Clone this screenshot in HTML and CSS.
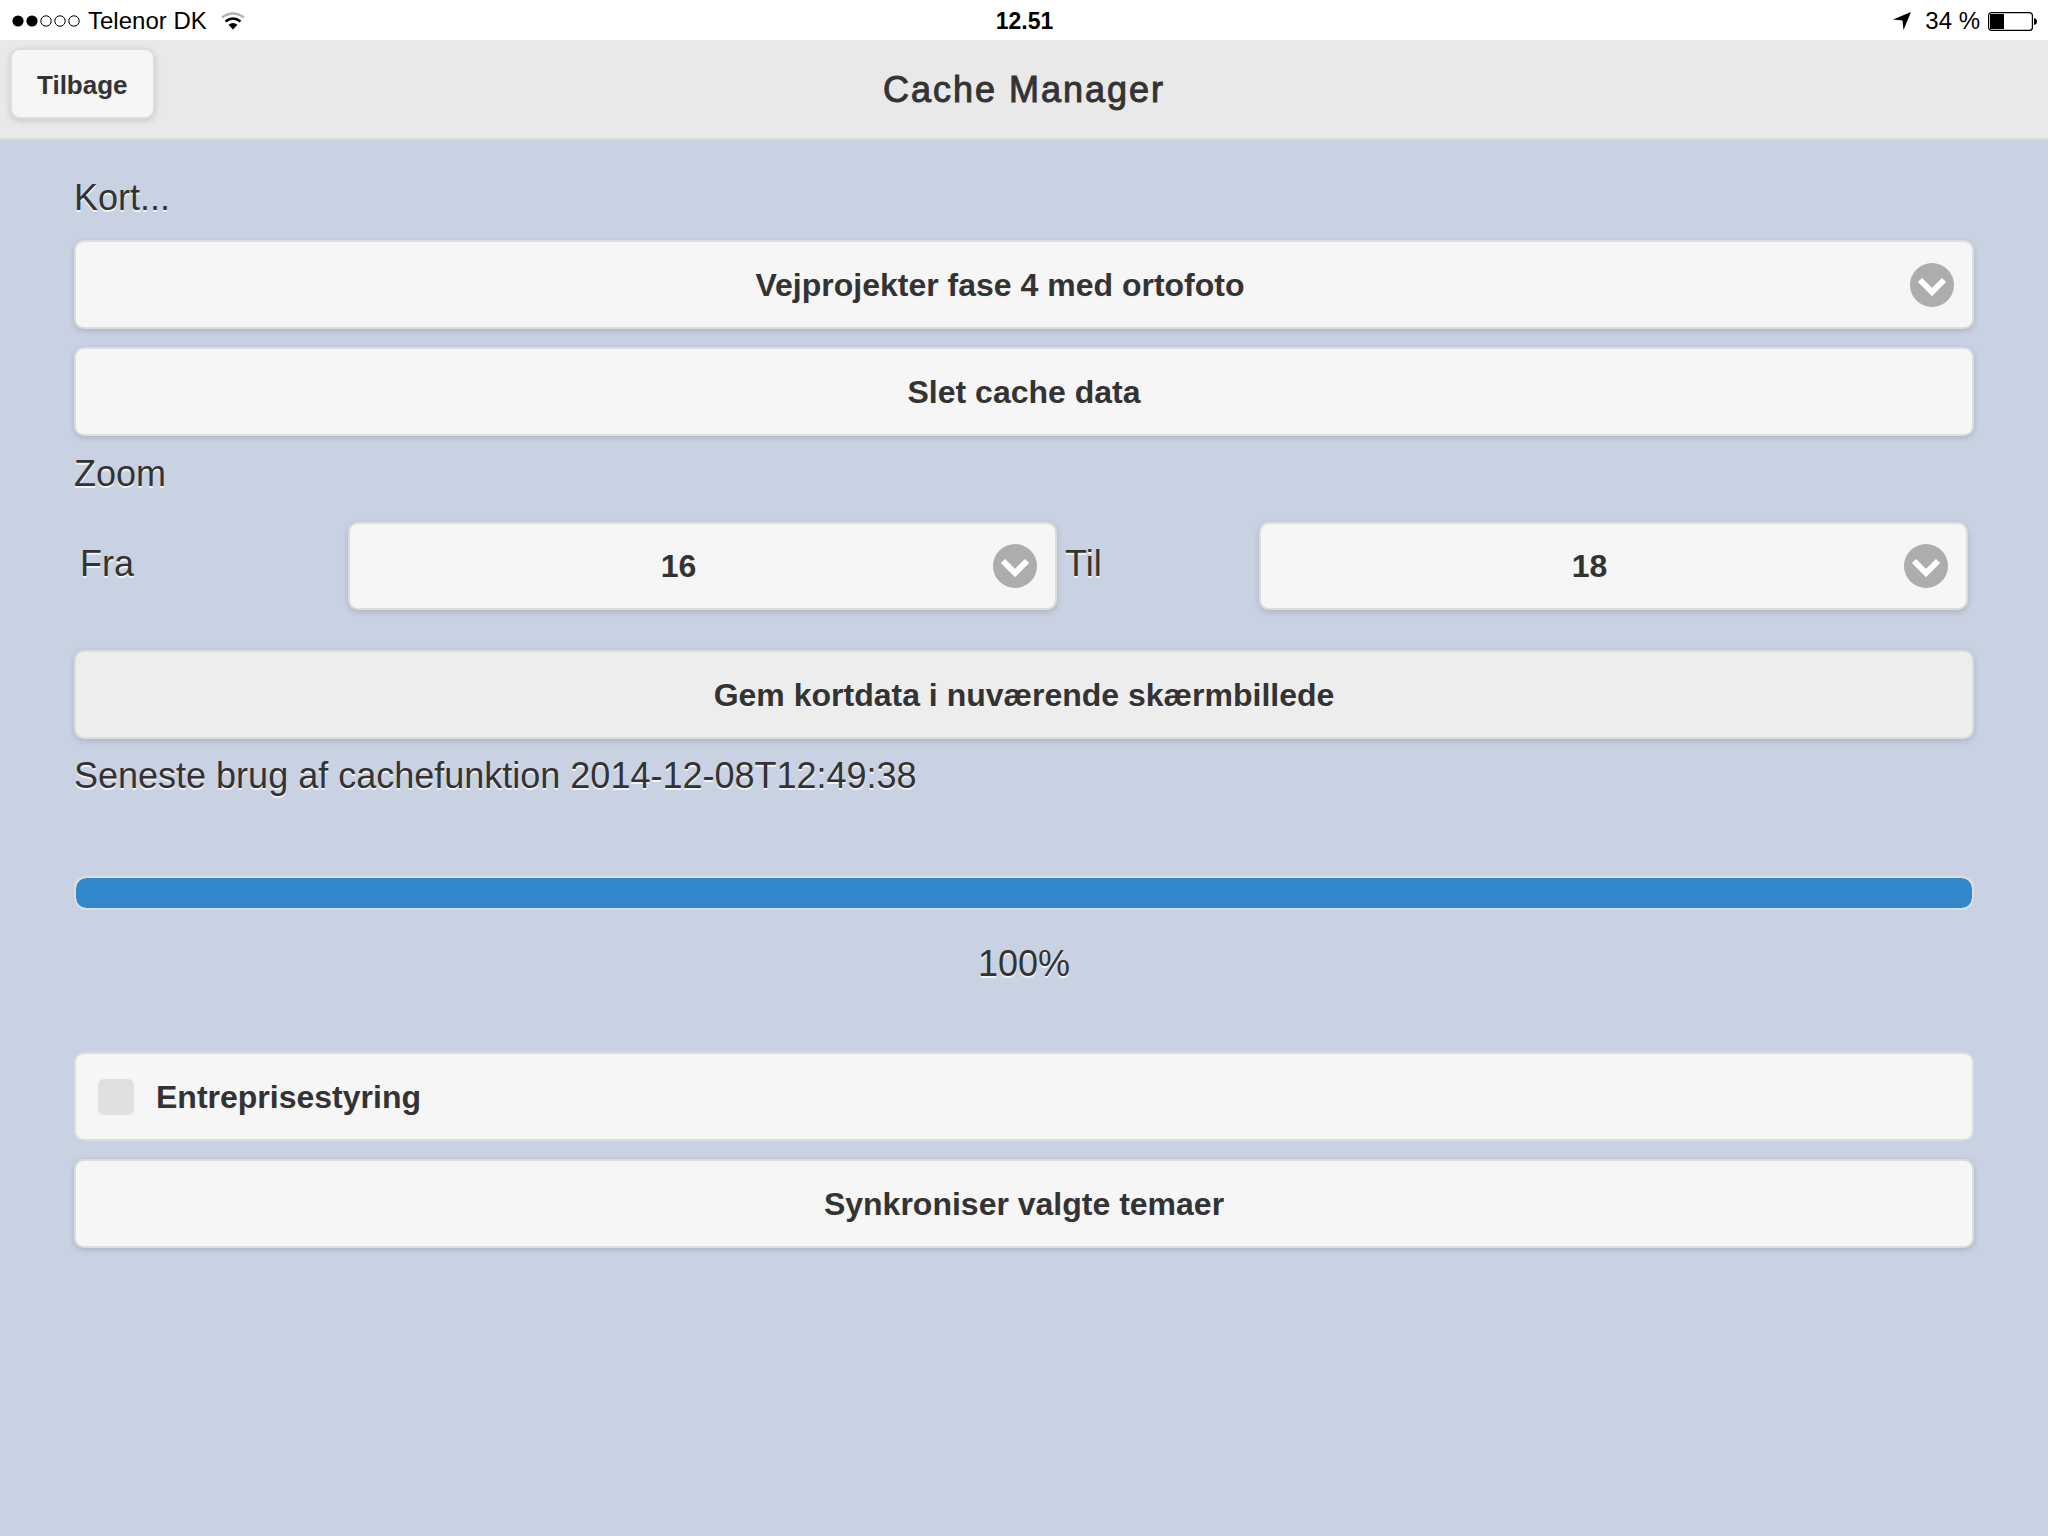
FILE: index.html
```html
<!DOCTYPE html>
<html lang="da">
<head>
<meta charset="utf-8">
<meta name="viewport" content="width=device-width, initial-scale=1">
<title>Cache Manager</title>
<link rel="stylesheet" href="styles.css">
</head>
<body>
<div class="status-bar">
  <div class="status-left">
    <svg class="signal" width="68" height="12" viewBox="0 0 68 12" aria-hidden="true">
      <circle cx="6" cy="6" r="5.6"/>
      <circle cx="20" cy="6" r="5.6"/>
      <g fill="none" stroke="#000" stroke-width="1"><circle cx="34" cy="6" r="5.2"/><circle cx="48" cy="6" r="5.2"/><circle cx="62" cy="6" r="5.2"/></g>
    </svg>
    <span>Telenor DK</span>
    <svg class="wifi" width="24" height="18" viewBox="0 0 24 18" aria-hidden="true">
      <path d="M1 5.500Q12-2.500 23 5.500" fill="none" stroke="#b3b3b3" stroke-width="2.400"/>
      <path d="M4.500 9.500Q12 3.500 19.500 9.500" fill="none" stroke="#000" stroke-width="2.600"/>
      <path d="M7.500 12.800Q12 9.200 16.500 12.800L12 17.500Z"/>
    </svg>
  </div>
  <div class="status-time">12.51</div>
  <div class="status-right">
    <svg width="18" height="18" viewBox="0 0 18 18" aria-hidden="true"><path d="M18 0L10.500 18L9.500 8.500L0 7.500Z"/></svg>
    <span>34 %</span>
    <svg class="battery" width="49" height="19" viewBox="0 0 49 19" aria-hidden="true">
      <rect x=".6" y=".6" width="43.800" height="17.800" rx="3" fill="none" stroke="#000" stroke-width="1.200"/>
      <path d="M2 2H16V17H2ZM46 6Q49 6.500 49 9.500T46 13Z"/>
    </svg>
  </div>
</div>

<header class="header">
  <button class="btn btn-back" type="button">Tilbage</button>
  <h1 class="title">Cache Manager</h1>
</header>

<main class="content">
  <label class="text" for="map">Kort...</label>
  <div class="select map-select">
    <select class="btn" id="map"><option>Vejprojekter fase 4 med ortofoto</option></select>
    <svg class="chevron" viewBox="0 0 44 44" aria-hidden="true"><circle cx="22" cy="22" r="22"/><path d="M10 17L22 29L34 17"/></svg>
  </div>
  <button class="btn" type="button">Slet cache data</button>

  <p class="text zoom-label">Zoom</p>
  <div class="zoom-row">
    <label class="text" for="from">Fra</label>
    <div class="select">
      <select class="btn" id="from"><option>16</option></select>
      <svg class="chevron" viewBox="0 0 44 44" aria-hidden="true"><circle cx="22" cy="22" r="22"/><path d="M10 17L22 29L34 17"/></svg>
    </div>
    <label class="text to-label" for="to">Til</label>
    <div class="select">
      <select class="btn" id="to"><option>18</option></select>
      <svg class="chevron" viewBox="0 0 44 44" aria-hidden="true"><circle cx="22" cy="22" r="22"/><path d="M10 17L22 29L34 17"/></svg>
    </div>
  </div>

  <button class="btn btn-active" type="button">Gem kortdata i nuværende skærmbillede</button>
  <p class="text last-used">Seneste brug af cachefunktion 2014-12-08T12:49:38</p>
  <progress class="progress" id="progress" value="100" max="100"></progress>
  <label class="text percent" for="progress">100%</label>

  <label class="btn check" for="contract"><input class="check-box" type="checkbox" id="contract">Entreprisestyring</label>
  <button class="btn" type="button">Synkroniser valgte temaer</button>
</main>
</body>
</html>
```
FILE: styles.css
```css
* {
  box-sizing: border-box;
}

body {
  margin: 0;
  min-height: 100vh;
  background: #c9d2e3;
  color: #333;
  font-family: "Liberation Sans", Arial, sans-serif;
}

/* Status bar */
.status-bar {
  display: grid;
  grid-template-columns: 1fr auto 1fr;
  align-items: center;
  height: 40px;
  padding: 2px 11px 0 12px;
  background: #fff;
  color: #000;
  font-size: 24px;
  line-height: 32px;
}

.status-left,
.status-right {
  display: flex;
  align-items: center;
  gap: 8px;
}

.wifi {
  margin-left: 6px;
}

.status-time {
  font-weight: bold;
  font-size: 23px;
}

.status-right {
  justify-content: flex-end;
}

.status-right span {
  margin-left: 6px;
}

/* Header */
.header {
  display: grid;
  grid-template-columns: 1fr auto 1fr;
  height: 100px;
  padding: 8px 10px 0;
  background: #e9e9e9;
  border-bottom: 2px solid #ddd;
}

.title {
  margin: 18px 0 0;
  font-size: 36px;
  line-height: 48px;
  font-weight: normal;
  letter-spacing: 2px;
  -webkit-text-stroke: 1px #333;
}

/* Controls */
.btn {
  display: block;
  width: 100%;
  min-height: 89px;
  margin: 0;
  padding: 0 20px;
  border: 2px solid #ddd;
  border-radius: 10px;
  background: #f6f6f6;
  box-shadow: 0 2px 6px rgba(0, 0, 0, 0.15);
  color: #333;
  font: bold 32px/42px "Liberation Sans", Arial, sans-serif;
  text-align: center;
  text-shadow: 0 2px 0 #f3f3f3;
}

.btn-back {
  width: auto;
  min-height: 71px;
  justify-self: start;
  align-self: start;
  padding: 2px 25px 0;
  font-size: 26px;
  line-height: 32px;
}

.btn-active {
  background: #ededed;
}

.select {
  display: grid;
  align-items: center;
}

.select > * {
  grid-area: 1 / 1;
}

.select .btn {
  appearance: none;
  padding: 0 48px 0 0;
  text-align-last: center;
}

.chevron {
  width: 44px;
  height: 44px;
  margin-right: 20px;
  justify-self: end;
  pointer-events: none;
}

.chevron circle {
  fill: #adadad;
}

.chevron path {
  fill: none;
  stroke: #fff;
  stroke-width: 6;
}

/* Page content */
.content {
  display: flex;
  flex-direction: column;
  padding: 34px 74px 40px;
}

.text {
  margin: 0;
  font-size: 36px;
  line-height: 48px;
  text-shadow: 0 2px 0 #f3f3f3;
}

.map-select {
  margin: 18px 0;
}

.zoom-label {
  margin-top: 14px;
}

.last-used {
  margin-top: 13px;
}

.zoom-row {
  display: grid;
  grid-template-columns: 268px 1fr 202px 1fr;
  align-items: center;
  margin: 24px 0 40px;
  padding: 0 6px;
}

.zoom-row .btn {
  min-height: 88px;
}

.zoom-row .text {
  padding-bottom: 4px;
}

.zoom-row .to-label {
  padding-left: 8px;
}

.progress {
  appearance: none;
  width: 100%;
  height: 34px;
  margin: 76px 0 30px;
  border: 2px solid #ddd;
  border-radius: 12px;
  background: #ddd;
  overflow: hidden;
}

.progress::-webkit-progress-bar {
  background: #ddd;
  border-radius: 10px;
}

.progress::-webkit-progress-value {
  background: #38c;
  border-radius: 10px;
}

.percent {
  align-self: center;
}

.check {
  display: flex;
  align-items: center;
  gap: 22px;
  margin: 64px 0 18px;
  padding: 0 22px;
  box-shadow: none;
}

.check-box {
  appearance: none;
  width: 36px;
  height: 36px;
  margin: 0;
  border-radius: 6px;
  background: #e0e0e0;
}

.check-box:checked {
  background: #38c;
}
```
